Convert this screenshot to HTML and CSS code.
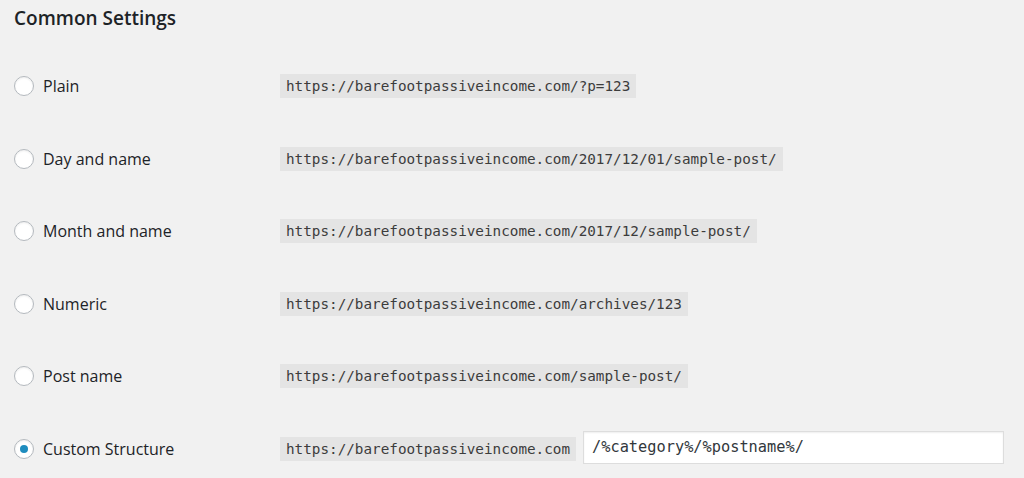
FILE: index.html
```html
<!DOCTYPE html>
<html lang="en">
<head>
    <meta charset="UTF-8">
    <title>Permalink Settings</title>
    <link rel="stylesheet" href="styles.css">
</head>
<body>
    <div class="wrap">
        <h2 class="title">Common Settings</h2>
        <div class="form-table">
            <div class="row">
                <label class="choice"><span class="radio"></span>Plain</label>
                <code>https://barefootpassiveincome.com/?p=123</code>
            </div>
            <div class="row">
                <label class="choice"><span class="radio"></span>Day and name</label>
                <code>https://barefootpassiveincome.com/2017/12/01/sample-post/</code>
            </div>
            <div class="row">
                <label class="choice"><span class="radio"></span>Month and name</label>
                <code>https://barefootpassiveincome.com/2017/12/sample-post/</code>
            </div>
            <div class="row">
                <label class="choice"><span class="radio"></span>Numeric</label>
                <code>https://barefootpassiveincome.com/archives/123</code>
            </div>
            <div class="row">
                <label class="choice"><span class="radio"></span>Post name</label>
                <code>https://barefootpassiveincome.com/sample-post/</code>
            </div>
            <div class="row">
                <label class="choice"><span class="radio checked"></span>Custom Structure</label>
                <code>https://barefootpassiveincome.com</code>
                <input class="structure" type="text" value="/%category%/%postname%/">
            </div>
        </div>
    </div>
</body>
</html>
```

FILE: styles.css
```css
* {
    margin: 0;
    padding: 0;
    box-sizing: border-box;
}

body {
    background-color: #f1f1f1;
    color: #1d2327;
    font-family: "Open Sans", sans-serif;
}

.wrap {
    padding: 0 20px 0 14px;
}

.title {
    font-size: 19px;
    font-weight: 600;
    line-height: 26px;
    padding-top: 5px;
    height: 50px;
}

.row {
    display: flex;
    align-items: center;
    height: 72.5px;
}

.choice {
    display: flex;
    align-items: center;
    width: 266px;
    font-size: 16px;
    font-weight: 500;
}

.radio {
    width: 20px;
    height: 20px;
    margin-right: 9px;
    border: 1px solid #b4b9be;
    border-radius: 50%;
    background-color: #fff;
    box-shadow: inset 0 1px 2px rgba(0, 0, 0, 0.07);
    display: flex;
    align-items: center;
    justify-content: center;
}

.radio.checked::after {
    content: "";
    width: 8px;
    height: 8px;
    border-radius: 50%;
    background-color: #1e8cbe;
}

code {
    font-family: "DejaVu Sans Mono", monospace;
    font-size: 14.3px;
    line-height: 24px;
    padding: 0 6px;
    background-color: #e4e4e4;
    color: #3c3c3c;
}

.structure {
    margin: 0 0 3px 7px;
    width: 421px;
    height: 33px;
    padding: 0 8px;
    border: 1px solid #ddd;
    background-color: #fff;
    font-family: "DejaVu Sans Mono", monospace;
    font-size: 15.3px;
    color: #32373c;
    box-shadow: inset 0 1px 2px rgba(0, 0, 0, 0.07);
}
```
